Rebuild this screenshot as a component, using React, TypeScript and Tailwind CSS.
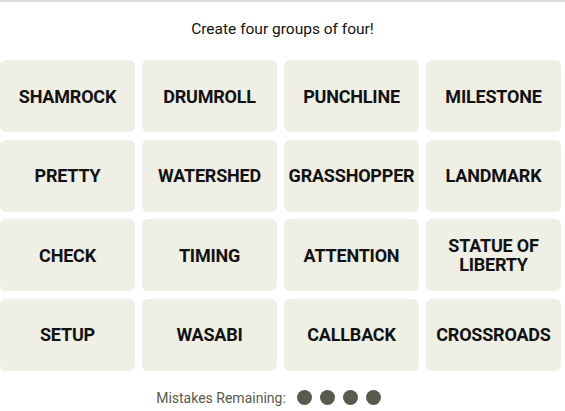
import React from 'react'

const words = [
  'SHAMROCK', 'DRUMROLL', 'PUNCHLINE', 'MILESTONE',
  'PRETTY', 'WATERSHED', 'GRASSHOPPER', 'LANDMARK',
  'CHECK', 'TIMING', 'ATTENTION', 'STATUE OF LIBERTY',
  'SETUP', 'WASABI', 'CALLBACK', 'CROSSROADS',
]

const App = () => {
  return (
    <div className="w-[565px] h-[411px] bg-white border-t-2 border-[#dcdcdc] font-['Roboto',sans-serif] text-black overflow-hidden">
      <div className="h-[58px] pt-[18px]">
        <p className="text-center text-[15.5px] leading-[18px] text-[#121212]">
          Create four groups of four!
        </p>
      </div>
      <div className="w-[561px] grid grid-cols-4 gap-x-[7px] gap-y-[7.5px]">
        {words.map((w) => (
          <button
            key={w}
            className="h-[72px] rounded-md bg-[#efefe6] flex items-center justify-center px-2 text-center text-[18px] leading-[19px] font-bold tracking-[-0.2px] text-[#121212]"
          >
            {w}
          </button>
        ))}
      </div>
      <div className="flex items-center justify-center pr-[28px] mt-[19px]">
        <span className="text-[14px] leading-[16px] text-[#5a594e] mr-[11px]">Mistakes Remaining:</span>
        <div className="flex gap-2">
          <span className="size-[15px] rounded-full bg-[#5a594e]" />
          <span className="size-[15px] rounded-full bg-[#5a594e]" />
          <span className="size-[15px] rounded-full bg-[#5a594e]" />
          <span className="size-[15px] rounded-full bg-[#5a594e]" />
        </div>
      </div>
    </div>
  )
}

export default App
